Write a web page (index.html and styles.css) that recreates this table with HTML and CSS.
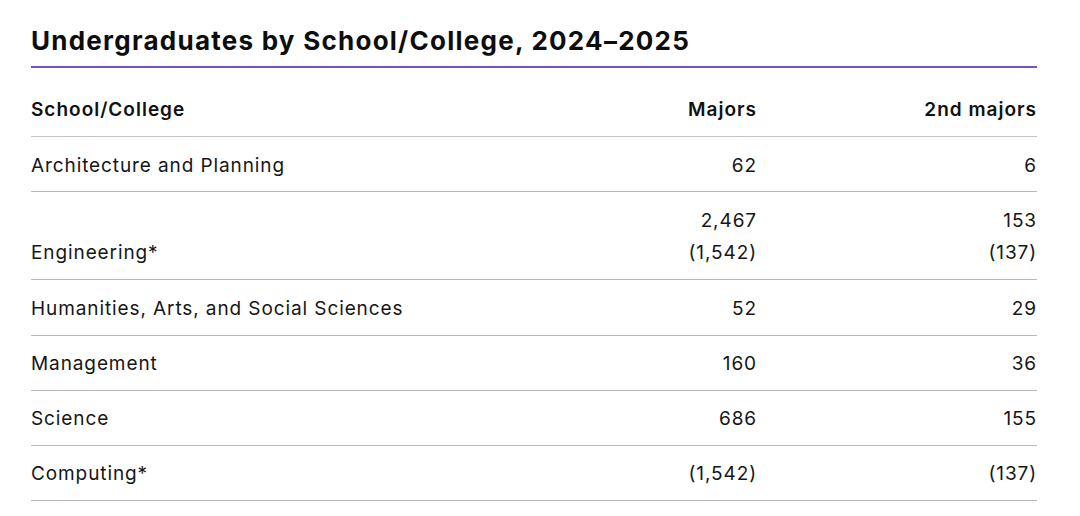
FILE: index.html
```html
<!DOCTYPE html>
<html lang="en">
<head>
<meta charset="utf-8">
<title>Undergraduates by School/College</title>
<link rel="stylesheet" href="styles.css">
</head>
<body>
<section class="panel">
  <h2 class="title">Undergraduates by School/College, 2024–2025</h2>
  <table class="data">
    <thead>
      <tr>
        <th class="name">School/College</th>
        <th class="num">Majors</th>
        <th class="num">2nd majors</th>
      </tr>
    </thead>
    <tbody>
      <tr>
        <td class="name">Architecture and Planning</td>
        <td class="num">62</td>
        <td class="num">6</td>
      </tr>
      <tr class="tall">
        <td class="name bottom">Engineering*</td>
        <td class="num">2,467<br>(1,542)</td>
        <td class="num">153<br>(137)</td>
      </tr>
      <tr>
        <td class="name">Humanities, Arts, and Social Sciences</td>
        <td class="num">52</td>
        <td class="num">29</td>
      </tr>
      <tr>
        <td class="name">Management</td>
        <td class="num">160</td>
        <td class="num">36</td>
      </tr>
      <tr>
        <td class="name">Science</td>
        <td class="num">686</td>
        <td class="num">155</td>
      </tr>
      <tr>
        <td class="name">Computing*</td>
        <td class="num">(1,542)</td>
        <td class="num">(137)</td>
      </tr>
    </tbody>
  </table>
</section>
</body>
</html>
```

FILE: styles.css
```css
html, body {
  margin: 0;
  padding: 0;
  background: #ffffff;
}

body {
  font-family: Inter, "Noto Sans", "Liberation Sans", sans-serif;
  color: #111111;
}

.panel {
  width: 1006px;
  margin: 0 0 0 31px;
  padding-top: 24px;
}

.title {
  margin: 0;
  font-size: 26px;
  font-weight: 700;
  line-height: 34px;
  letter-spacing: 1.25px;
  padding-bottom: 8px;
  border-bottom: 2px solid #7b4fc0;
  color: #0d0d0d;
}

.data {
  width: 100%;
  border-collapse: collapse;
  font-size: 19px;
  line-height: 32px;
  letter-spacing: 0.9px;
}

.data th {
  font-weight: 600;
  letter-spacing: 1px;
  padding: 26px 0 10px;
  border-bottom: 1px solid #c4c4c4;
}

.data td {
  padding: 12.5px 0 9.7px;
  border-bottom: 1px solid #b8b8b8;
  vertical-align: top;
  color: #161616;
}

.data tr.tall td {
  padding-bottom: 10.7px;
}

.data .name {
  text-align: left;
}

.data .num {
  text-align: right;
  width: 280px;
}

.data td.bottom {
  vertical-align: bottom;
}
```
